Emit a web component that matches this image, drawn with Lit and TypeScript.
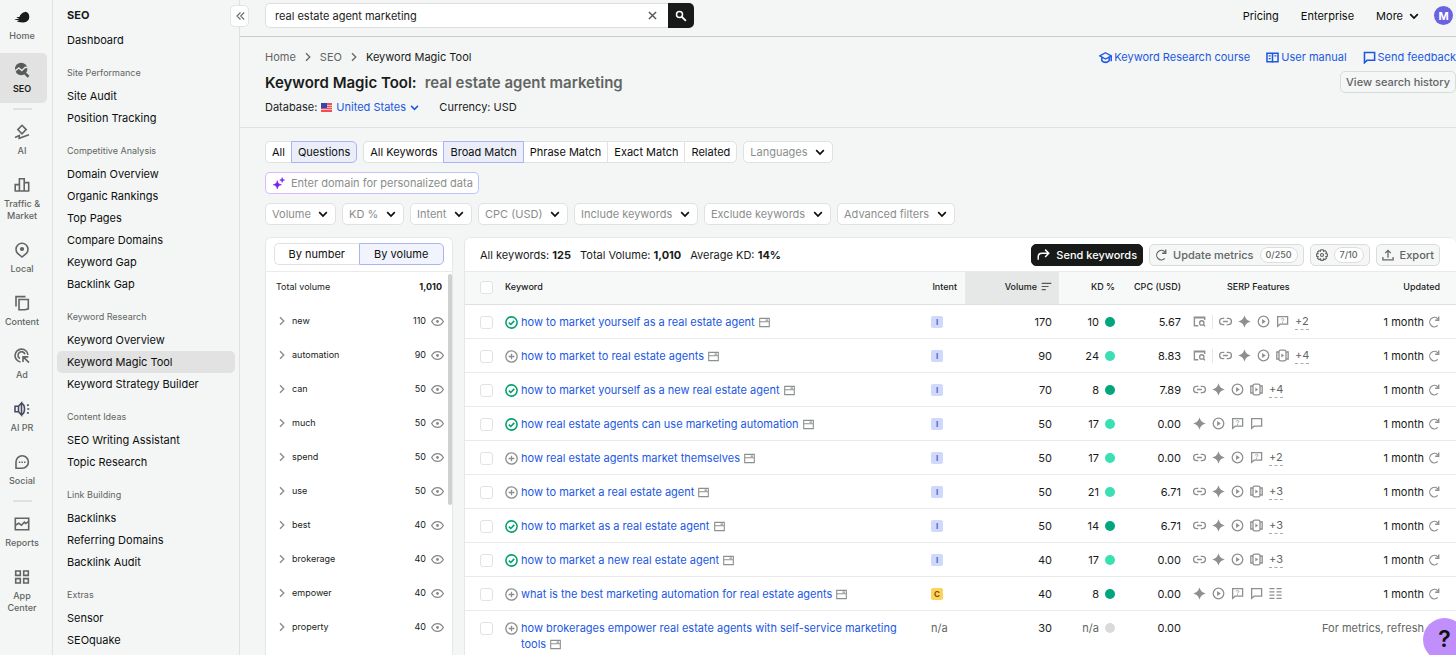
import { LitElement, html, css, svg, nothing } from "lit";
import { customElement } from "lit/decorators.js";
import { classMap } from "lit/directives/class-map.js";

const icon = (body: unknown, size = 16, box = 16, cls = "") => html`<svg
  class="icon ${cls}" width=${size} height=${size} viewBox="0 0 ${box} ${box}"
  fill="none" stroke="currentColor" stroke-width="1.6" aria-hidden="true">${body}</svg>`;

const chevDown = (size = 10) => icon(svg`<path d="M1.2 3.2 5 7l3.8-3.8" stroke-width="1.7"/>`, size, 10, "chev");
const chevRight = (size = 10) => icon(svg`<path d="M3 1.2 6.8 5 3 8.8" stroke-width="1.3"/>`, size, 10, "next");

const rail: Record<string, unknown> = {
  home: svg`<path d="M15.300 8.100c0 3.100-2.500 5.300-5.700 5.300-2.400 0-4.500-.3-6.300-.7-.4-.1-.3-.5.1-.5 1 0 1.800 0 2.300-.1-.9-.5-2.200-.9-4.700-1.500-.5-.1-.4-.6.1-.6 1.700 0 3 .1 4.100 0-.8-.6-1.500-1-2.400-1.500-.4-.3-.2-.7.300-.6.800.1 1.600.2 2.300.1C6 5.200 8.500 3.300 11 2.900c2.500-.3 4.300 1.900 4.300 5.200Z" fill="currentColor" stroke="none"/>`,
  seo: svg`<circle cx="7.200" cy="7" r="6.200" fill="currentColor" stroke="none"/><path d="m11 11.400 3.600 3.400" stroke-width="2.600"/><path d="M.5 9.300 4.800 6l3 2.500 3.500-3.300 3.200.3" stroke="#e1e2e1" stroke-width="1.500"/>`,
  ai: svg`<path d="m8 1.300 4.200 4.300L8 9.900 3.800 5.600Z"/><path d="M1 13.500l4.300-1.900-.1 2.700 9.800-3.500"/>`,
  traffic: svg`<path d="M1.200 14V7.600h4.200V14M5.400 14V1.800h4.800V14M10.200 14V5.600h4.500V14M.6 14h14.800"/>`,
  local: svg`<path d="M8 15 3.600 11.400a6 6 0 1 1 8.800 0Z"/><circle cx="8" cy="7" r="1.300" fill="currentColor"/>`,
  content: svg`<path d="M5 4.500h9.300v9.300L11 14.800H5Z"/><path d="M2 11.500V1.600h9.500"/>`,
  ad: svg`<path d="M6.500 14A6.500 6.500 0 1 1 14 7"/><path d="M6 10.600A3.600 3.600 0 1 1 11 6.200"/><path d="m15 14.600-5-5M9 14V8.900h5.300"/>`,
  pr: svg`<g stroke="#484a62"><path d="M1 5.200h3.500v5.600H1ZM4.500 5.200 7.500 2v12l-3-3.200"/><path d="M7.500 2.200c2.500 1 3 3.200 3 5.800s-.5 4.800-3 5.800"/><path d="m13 4.500 1.800-.8M13.300 8h2M13 11.500l1.800.8"/></g>`,
  social: svg`<path d="M2 14.200V8a6.200 6.200 0 1 1 6.200 6.200Z"/><path d="M4.800 8.200h1.500M7.400 8.200h1.500M10 8.200h1.500" stroke-width="1.500"/>`,
  reports: svg`<path d="M1.300 2.200h13.400v11.600H1.300Z"/><path d="m1.300 9.300 3.500-2.100 2.600 2 3-3 1.200 1.200 3-1.800"/>`,
  app: svg`<path d="M1.700 2h4.600v4.400H1.700ZM9.700 2h4.600v4.400H9.700ZM1.700 9.600h4.600V14H1.700ZM9.700 9.600h4.600V14H9.700Z"/>`,
};

const serp: Record<string, unknown> = {
  page: svg`<path d="M6.500 13.300H1.700V2.700h12.700V6M1 3.600h14" stroke-width="1.700"/><circle cx="10.800" cy="9.800" r="2.700"/><path d="m12.600 11.700 2.200 2.300"/>`,
  link: svg`<path d="M6.500 4.200H4.400a3.800 3.800 0 0 0 0 7.600h2.100M9.500 4.200h2.100a3.800 3.800 0 0 1 0 7.600H9.500M5 8h6" stroke-width="1.700"/>`,
  star: svg`<path d="M8 .3c1.200 4.300 3 6.300 7.700 7.700-4.700 1.400-6.500 3.400-7.700 7.700C6.800 11.400 5 9.400.3 8 5 6.600 6.800 4.600 8 .3Z" fill="currentColor" stroke="none"/>`,
  play: svg`<circle cx="8" cy="8" r="6.500"/><path d="M6.300 5v6l4.500-3Z" fill="currentColor" stroke="none"/>`,
  faq: svg`<path d="M2 14V2h12.300v9.300H5Z"/><path d="M6.400 5.500c.2-1.600 3.200-1.500 3.200.1 0 1.100-1.500 1.100-1.500 2.200M8.100 8.700v1.200" stroke-width="1.100"/>`,
  video: svg`<rect x="3.700" y="1.500" width="8.600" height="13" rx="2"/><path d="M3.700 3.700H1v8.600h2.700M12.300 3.700H15v8.600h-2.700"/><path d="M6.500 5.500v5L10 8Z" fill="currentColor" stroke="none"/>`,
  chat: svg`<path d="M2 14V2h12.300v9.300H5Z"/>`,
  list: svg`<path d="M.5 2h6.300M9.200 2h6.300M.5 6h6.300M9.200 6h6.300M.5 10h6.300M9.200 10h6.300M.5 14h6.300M9.200 14h6.300"/>`,
};

const refresh = (size = 12) => icon(svg`<path d="M13 12.600A6.300 6.300 0 1 1 12.800 3.500l1 1.600"/><path d="M14.300.8v4.800H9.500" stroke-width="1.800"/>`, size);
const pageIcon = icon(svg`<path d="M1 2h14v12H1ZM1 7h14M9.500 4.500h3.500"/>`, 11, 16, "pg");
const eye = icon(svg`<path d="M.8 8C2.600 4.700 5 3.200 8 3.200S13.400 4.700 15.200 8C13.400 11.300 11 12.800 8 12.800S2.600 11.300.8 8Z"/><circle cx="8" cy="8" r="1.700" fill="currentColor" stroke="none"/>`, 13);
const added = icon(svg`<circle cx="8" cy="8" r="6.900" stroke-width="1.900"/><path d="m4.700 8.200 2.400 2.300 4.300-4.500" stroke-width="1.900"/>`, 13, 16, "added");
const add = icon(svg`<circle cx="8" cy="8" r="7"/><path d="M8 4.500v7M4.500 8h7"/>`, 13, 16, "add");

const railItems: (string[] | null)[] = [
  ["home", "Home"], ["seo", "SEO"], null, ["ai", "AI"], ["traffic", "Traffic & Market"],
  ["local", "Local"], ["content", "Content"], ["ad", "Ad"], ["pr", "AI PR"], ["social", "Social"],
  null, ["reports", "Reports"], ["app", "App Center"],
];

const menu: [string, string[]][] = [
  ["Site Performance", ["Site Audit", "Position Tracking"]],
  ["Competitive Analysis", ["Domain Overview", "Organic Rankings", "Top Pages", "Compare Domains", "Keyword Gap", "Backlink Gap"]],
  ["Keyword Research", ["Keyword Overview", "Keyword Magic Tool", "Keyword Strategy Builder"]],
  ["Content Ideas", ["SEO Writing Assistant", "Topic Research"]],
  ["Link Building", ["Backlinks", "Referring Domains", "Backlink Audit"]],
  ["Extras", ["Sensor", "SEOquake"]],
];

const groups: [string, number][] = [
  ["new", 110], ["automation", 90], ["can", 50], ["much", 50], ["spend", 50],
  ["use", 50], ["best", 40], ["brokerage", 40], ["empower", 40], ["property", 40],
];

interface Row {
  kw: string; added?: boolean; intent: string; vol: number; kd: string; level: string;
  cpc: string; serp: string; more?: string; updated?: string;
}
const rows: Row[] = [
  { kw: "how to market yourself as a real estate agent", added: true, intent: "I", vol: 170, kd: "10", level: "very", cpc: "5.67", serp: "page | link star play faq", more: "+2" },
  { kw: "how to market to real estate agents", intent: "I", vol: 90, kd: "24", level: "easy", cpc: "8.83", serp: "page | link star play video", more: "+4" },
  { kw: "how to market yourself as a new real estate agent", added: true, intent: "I", vol: 70, kd: "8", level: "very", cpc: "7.89", serp: "link star play video", more: "+4" },
  { kw: "how real estate agents can use marketing automation", added: true, intent: "I", vol: 50, kd: "17", level: "easy", cpc: "0.00", serp: "star play faq chat" },
  { kw: "how real estate agents market themselves", intent: "I", vol: 50, kd: "17", level: "easy", cpc: "0.00", serp: "link star play faq", more: "+2" },
  { kw: "how to market a real estate agent", intent: "I", vol: 50, kd: "21", level: "easy", cpc: "6.71", serp: "link star play video", more: "+3" },
  { kw: "how to market as a real estate agent", added: true, intent: "I", vol: 50, kd: "14", level: "very", cpc: "6.71", serp: "link star play video", more: "+3" },
  { kw: "how to market a new real estate agent", added: true, intent: "I", vol: 40, kd: "17", level: "easy", cpc: "0.00", serp: "link star play video", more: "+3" },
  { kw: "what is the best marketing automation for real estate agents", intent: "C", vol: 40, kd: "8", level: "very", cpc: "0.00", serp: "star play faq chat list" },
  { kw: "how brokerages empower real estate agents with self-service marketing tools", intent: "n/a", vol: 30, kd: "n/a", level: "none", cpc: "0.00", serp: "", updated: "For metrics, refresh" },
];

@customElement("app-root")
export class AppRoot extends LitElement {
  static styles = css`
    :host {
      display: block; height: 100vh; overflow: hidden; background: #f4f6f5; color: #191b1a;
      font: 11px/16px Inter, "Liberation Sans", sans-serif;
    }
    * { box-sizing: border-box; }
    button, input, select { font: inherit; color: inherit; margin: 0; }
    button { cursor: pointer; }
    a { color: inherit; text-decoration: none; }
    h1, h2, h3 { margin: 0; padding: 0; font: inherit; }
    .icon { flex: none; display: block; }

    .shell { display: grid; grid-template-columns: 53px 187px minmax(0, 1fr); height: 100%; }

    .rail { display: flex; flex-direction: column; gap: 3px; border-right: 1px solid #e0e1e1; padding-right: 5px; overflow: hidden; }
    .rail-item {
      display: flex; flex-direction: column; align-items: center; gap: 5px; flex: none; padding: 9px 3px 8px 0;
      font-size: 9px; line-height: 12px; font-weight: 500; text-align: center; color: #626563; border-radius: 0 5px 5px 0;
    }
    .rail-item.on { background: #e1e2e1; color: #191b1a; font-weight: 600; }
    .rail-item.on .icon { color: #575a59; }
    .rail-item.home .icon { color: #191b1a; }
    .rail-sep { flex: none; height: 6px; width: 19px; margin-left: 13px; padding: 2px 0; background: #dfe0df content-box; }

    .side { border-right: 1px solid #e0e1e1; padding: 4px 4px 0; overflow: hidden; }
    .side-title { padding: 0 10px; line-height: 22px; font-weight: 700; margin-bottom: 3px; }
    .side-link { display: block; padding: 0 10px; line-height: 22px; border-radius: 5px; color: #0d0e0e; }
    .side-link.on { background: #e1e2e1; }
    .side-head { padding: 15px 10px 6px; font-size: 9px; line-height: 13px; color: #626563; }

    .main { position: relative; min-width: 0; display: flex; flex-direction: column; }
    .collapse {
      position: absolute; left: -10px; top: 5px; width: 19px; height: 22px; z-index: 2; padding: 0;
      display: grid; place-items: center; background: #fff; border: 1px solid #e3e4e4; border-radius: 5px; color: #6c6e79;
    }
    .top { display: flex; align-items: center; justify-content: space-between; height: 37px; padding: 0 3px 5px 25px; border-bottom: 1px solid #c9cccb; }
    .search { display: flex; width: 429px; height: 25px; }
    .search-box { flex: 1; display: flex; align-items: center; background: #fff; border: 1px solid #dcdedd; border-right: 0; border-radius: 5px 0 0 5px; padding-right: 9px; }
    .search-box input { flex: 1; min-width: 0; border: 0; outline: 0; background: none; padding: 0 9px; }
    .search-box button { border: 0; background: none; padding: 2px; color: #575a59; }
    .search-go { width: 26px; border: 0; padding: 0; background: #171a18; color: #fff; border-radius: 0 5px 5px 0; display: grid; place-items: center; }
    .nav { display: flex; align-items: center; gap: 22px; color: #0d0e0e; }
    .nav a { display: flex; align-items: center; gap: 6px; }
    .nav .account { display: grid; place-items: center; width: 19px; height: 19px; margin-left: -7px; border-radius: 50%; background: #6a62e0; color: #fff; font-weight: 700; }

    .head { display: flex; justify-content: space-between; padding: 12px 0 12px 25px; border-bottom: 1px solid #e0e1e1; }
    .crumbs { display: flex; align-items: center; gap: 7px; color: #626563; }
    .crumbs .here { color: #191b1a; }
    .title { display: flex; gap: 8px; margin: 6px 0 4px; font-size: 15px; line-height: 24px; font-weight: 600; }
    .title .q { color: #626563; }
    .meta { display: flex; align-items: center; gap: 20px; }
    .db { display: flex; align-items: center; gap: 4px; }
    .pick { display: inline-grid; align-items: center; }
    .pick select { grid-area: 1 / 1; appearance: none; border: 0; background: none; padding: 0; outline: 0; }
    .pick .chev { grid-area: 1 / 1; justify-self: end; pointer-events: none; color: #0d0e0e; }
    .pick.blue, .pick.blue .chev { color: #1b58e2; }
    .pick.blue select { padding-right: 13px; }
    .tools { display: flex; flex-direction: column; align-items: flex-end; gap: 6px; }
    .links { display: flex; gap: 16px; color: #1b58e2; }
    .links a { display: flex; align-items: center; gap: 2px; }
    .btn {
      display: inline-flex; align-items: center; gap: 6px; height: 22px; padding: 0 5px; white-space: nowrap;
      background: #f5f6f6; border: 1px solid #d9dcdb; border-radius: 5px; color: #626563; font-weight: 500;
    }
    .btn.dark { background: #171a18; border-color: #171a18; color: #fff; }
    .pill { border: 1px solid #dcdedd; border-radius: 9px; background: #fff; line-height: 14px; padding: 0 5px; font-size: 9px; }

    .filters { display: flex; flex-direction: column; gap: 9px; padding: 13px 0 12px 25px; }
    .frow { display: flex; gap: 6px; }
    .seg { display: flex; }
    .seg button {
      height: 22px; padding: 0 6px; background: #fff; border: 1px solid #e0e1e1; border-right-width: 0; color: #0d0e0e; white-space: nowrap;
    }
    .seg button:first-child { border-radius: 5px 0 0 5px; }
    .seg button:last-child { border-radius: 0 5px 5px 0; border-right-width: 1px; }
    .seg button.on { background: #ebedf8; border: 1px solid #aab4f4; }
    .seg button.on + button { border-left: 0; }
    .filters .pick { height: 22px; background: #fff; border: 1px solid #e0e1e1; border-radius: 5px; }
    .filters .pick select { color: #8a8e8c; padding: 0 24px 0 6px; height: 20px; }
    .filters .pick .chev { margin-right: 7px; }
    .domain {
      display: flex; align-items: center; gap: 6px; width: 214px; height: 22px; padding: 0 5px 0 6px; border: 1px solid transparent; border-radius: 5px;
      background: linear-gradient(#fff, #fff) padding-box, linear-gradient(90deg, #dcb8ff, #b9c6fb) border-box;
    }
    .domain input { flex: 1; min-width: 0; border: 0; outline: 0; padding: 0; background: none; }
    .domain input::placeholder { color: #8a8e8c; opacity: 1; }
    .domain .icon { color: #7a1ff0; }

    .body { flex: 1; min-height: 0; display: grid; grid-template-columns: 188px minmax(0, 1fr); gap: 11px; padding-left: 25px; }
    .card { background: #fff; border: 1px solid #e6e8e7; border-bottom: 0; border-radius: 6px 6px 0 0; overflow: hidden; min-height: 0; }
    .card.data { border-right: 0; }
    .groups { display: flex; flex-direction: column; }
    .by { padding: 5px 8px 6px; border-bottom: 1px solid #e9ebea; }
    .by .seg button { flex: 1; }
    .by .seg button.on { background: #f1f3fd; }
    .scroll { flex: 1; min-height: 0; display: flex; overflow: hidden; }
    .thumb { width: 4px; height: 231px; margin-top: 2px; border-radius: 3px; background: #cfd1d0; }
    .list { flex: 1; font-size: 9px; }
    .total { display: flex; justify-content: space-between; padding: 7px 6px 9px 10px; }
    .group { display: flex; align-items: center; height: 34px; padding: 0 4px 0 11px; }
    .group .name { flex: 1; padding-left: 5px; }
    .group .eye { border: 0; padding: 0; background: none; margin-left: 5px; }
    .group .icon { color: #858987; }

    .bar { display: flex; align-items: center; justify-content: space-between; height: 34px; padding: 0 16px 0 15px; border-bottom: 1px solid #e9ebea; }
    .stats, .acts { display: flex; align-items: center; }
    .stats { gap: 9px; }
    .acts { gap: 6px; }
    table { width: 100%; border-collapse: collapse; table-layout: fixed; }
    .c-check { width: 40px; } .c-intent { width: 40px; } .c-vol { width: 94px; } .c-kd { width: 62px; }
    .c-cpc { width: 66px; } .c-serp { width: 130px; } .c-upd { width: 139px; }
    th { height: 32px; padding: 0 0 2px; font-size: 9px; font-weight: 500; text-align: left; background: #f7f8f8; border-bottom: 1px solid #dfe1e0; white-space: nowrap; }
    td { padding: 9px 0 8px; vertical-align: top; border-bottom: 1px solid #e9ebea; }
    .check { padding-left: 15px; }
    .check input {
      appearance: none; display: block; width: 13px; height: 13px; margin: 2px 0 1px; border: 1px solid #e1e3e2; border-radius: 3px; background: #fff;
    }
    .num { text-align: right; white-space: nowrap; }
    .vol { padding-right: 7px; }
    th.vol { background: #e6e7e7; }
    th .icon { color: #575a59; }
    .vol .in, .kd .in, .upd .in { display: flex; justify-content: flex-end; align-items: center; gap: 4px; }
    .kd { padding-right: 6px; }
    .kd .in { gap: 6px; }
    .cpc { padding-right: 6px; }
    .upd { padding-right: 16px; }
    .upd .icon, .serp .icon { color: #8c908e; }
    .dot { width: 10px; height: 10px; border-radius: 50%; }
    .very { background: #00a67c; } .easy { background: #39e0b1; } .none { background: #d8dbda; }
    .muted { color: #626563; }
    .kw { display: flex; gap: 3px; padding-right: 20px; }
    .kw .icon { margin-top: 2px; }
    .kw a { color: #1b58e2; }
    .kw .pg { display: inline-block; vertical-align: top; margin: 3px 0 0 1px; color: #8c908e; }
    .added { color: #00a06f; } .add { color: #8a8e8c; }
    .th-intent { text-align: right; padding-right: 8px; }
    .intent { padding-left: 6px; }
    .badge { display: block; width: 12px; margin-top: 2px; line-height: 12px; border-radius: 2px; text-align: center; font-size: 8px; font-weight: 700; background: #cfd9fb; color: #5a5fc4; }
    .badge.c { background: #fbd25c; color: #8a4d00; }
    .serp .in { display: flex; align-items: center; gap: 6px; padding-left: 6px; height: 16px; }
    .th-serp { padding-left: 40px; }
    .serp .sep { width: 1px; height: 14px; background: #e6e8e7; }
    .serp .more { border-bottom: 1px dashed #a9acab; color: #626563; line-height: 16px; }
    .help {
      position: fixed; right: -10px; bottom: -6px; width: 43px; height: 43px; border: 0; border-radius: 50%;
      background: #c18ffc; color: #111; font-size: 23px; font-weight: 600; line-height: 43px; padding: 0;
    }
  `;

  private pick(label: string) {
    return html`<span class="pick"><select aria-label=${label}><option>${label}</option></select>${chevDown()}</span>`;
  }

  private seg(label: string, items: string[], on: string) {
    return html`<div class="seg" role="group" aria-label=${label}>
      ${items.map((t) => html`<button type="button" class=${classMap({ on: t === on })} aria-pressed=${t === on}>${t}</button>`)}
    </div>`;
  }

  private row(r: Row) {
    return html`<tr>
      <td class="check"><input type="checkbox" aria-label="Select ${r.kw}" /></td>
      <td><div class="kw">${r.added ? added : add}<span><a href="#">${r.kw}</a> ${pageIcon}</span></div></td>
      <td class="intent">${r.intent === "n/a" ? html`<span class="muted">n/a</span>`
        : html`<span class="badge ${classMap({ c: r.intent === "C" })}">${r.intent}</span>`}</td>
      <td class="num vol">${r.vol}</td>
      <td class="num kd"><div class="in"><span class=${classMap({ muted: r.level === "none" })}>${r.kd}</span><span class="dot ${r.level}"></span></div></td>
      <td class="num cpc">${r.cpc}</td>
      <td class="serp"><div class="in">
        ${r.serp ? r.serp.split(" ").map((k) => k === "|" ? html`<span class="sep"></span>` : icon(serp[k], 13)) : nothing}
        ${r.more ? html`<span class="more">${r.more}</span>` : nothing}
      </div></td>
      <td class="num upd"><div class="in"><span class=${classMap({ muted: !!r.updated })}>${r.updated ?? "1 month"}</span>${refresh()}</div></td>
    </tr>`;
  }

  render() {
    return html`<div class="shell">
      <nav class="rail" aria-label="Products">
        ${railItems.map((i) => i
          ? html`<a href="#" class="rail-item ${classMap({ on: i[0] === "seo", home: i[0] === "home" })}">${icon(rail[i[0]])}<span>${i[1]}</span></a>`
          : html`<div class="rail-sep"></div>`)}
      </nav>
      <nav class="side" aria-label="SEO">
        <h2 class="side-title">SEO</h2>
        <a href="#" class="side-link">Dashboard</a>
        ${menu.map(([h, links]) => html`<h3 class="side-head">${h}</h3>
          ${links.map((l) => html`<a href="#" class="side-link ${classMap({ on: l === "Keyword Magic Tool" })}">${l}</a>`)}`)}
      </nav>
      <main class="main">
        <button type="button" class="collapse" aria-label="Collapse menu">${icon(svg`<path d="M5.500 1.500 2 5l3.500 3.500M9.200 1.500 5.700 5l3.500 3.500" stroke-width="1.200"/>`, 10, 10)}</button>
        <header class="top">
          <form class="search" @submit=${(e: Event) => e.preventDefault()}>
            <div class="search-box">
              <input type="text" aria-label="Search" value="real estate agent marketing" />
              <button type="button" aria-label="Clear">${icon(svg`<path d="m1 1 8 8M9 1 1 9" stroke-width="1.600"/>`, 9, 10)}</button>
            </div>
            <button class="search-go" aria-label="Search">${icon(svg`<circle cx="6" cy="6" r="4" stroke-width="2"/><path d="m9 9 5.500 5.500" stroke-width="2.400"/>`, 12)}</button>
          </form>
          <nav class="nav" aria-label="Account">
            <a href="#">Pricing</a><a href="#">Enterprise</a><a href="#">More ${chevDown()}</a><a href="#" class="account">M</a>
          </nav>
        </header>
        <section class="head">
          <div>
            <nav class="crumbs" aria-label="Breadcrumb">
              <a href="#">Home</a>${chevRight()}<a href="#">SEO</a>${chevRight()}<span class="here">Keyword Magic Tool</span>
            </nav>
            <h1 class="title"><span>Keyword Magic Tool:</span><span class="q">real estate agent marketing</span></h1>
            <div class="meta">
              <label class="db">Database:
                <svg class="icon" width="11" height="9" viewBox="0 0 11 9" aria-hidden="true"><path fill="#e8505a" d="M0 0h11v9H0z"/><path stroke="#f8b9bd" d="M0 2.500h11M0 4.500h11M0 6.500h11"/><path fill="#3546b0" d="M0 0h6v5H0z"/></svg>
                <span class="pick blue"><select><option>United States</option></select>${chevDown(9)}</span>
              </label>
              <span>Currency: USD</span>
            </div>
          </div>
          <div class="tools">
            <div class="links">
              <a href="#">${icon(svg`<path d="M8 2.200 15 6 8 9.800 1 6Z"/><path d="M3.500 7.500v4.500C6 14.700 10 14.700 12.500 12V7.500M15 6v6.500" stroke-width="1.900"/>`, 13)}Keyword Research course</a>
              <a href="#">${icon(svg`<path d="M8 3.500V14.500M8 2.800H1.200v10.400H14.800V2.800Z" stroke-width="1.900"/><path d="M3.300 6h2.500M3.300 9.500h2.500M10.300 6h2.500"/>`, 13)}User manual</a>
              <a href="#">${icon(svg`<path d="M1.800 14.500V1.800h12.500v9.700H5Z" stroke-width="1.900"/>`, 13)}Send feedback</a>
            </div>
            <button type="button" class="btn">View search history</button>
          </div>
        </section>
        <section class="filters">
          <div class="frow">
            ${this.seg("Keyword type", ["All", "Questions"], "Questions")}
            ${this.seg("Match type", ["All Keywords", "Broad Match", "Phrase Match", "Exact Match", "Related"], "Broad Match")}
            ${this.pick("Languages")}
          </div>
          <label class="domain">${icon(svg`<path d="M6.500 4.500c.7 3.200 1.800 4.400 5 5-3.200.6-4.300 1.800-5 5-.7-3.200-1.800-4.400-5-5 3.200-.6 4.300-1.800 5-5ZM12.500.8c.4 1.900 1 2.500 2.900 2.900-1.900.4-2.500 1-2.900 2.900-.4-1.900-1-2.500-2.900-2.900 1.900-.4 2.500-1 2.900-2.900Z" fill="currentColor" stroke-width=".8"/>`, 13)}
            <input type="text" aria-label="Domain" placeholder="Enter domain for personalized data" /></label>
          <div class="frow">
            ${["Volume", "KD %", "Intent", "CPC (USD)", "Include keywords", "Exclude keywords", "Advanced filters"].map((t) => this.pick(t))}
          </div>
        </section>
        <section class="body">
          <aside class="card groups">
            <div class="by">${this.seg("Group by", ["By number", "By volume"], "By volume")}</div>
            <div class="scroll">
              <div class="list">
                <div class="total"><span>Total volume</span><strong>1,010</strong></div>
                ${groups.map(([n, v]) => html`<div class="group">${chevRight()}<span class="name">${n}</span><span>${v}</span>
                  <button type="button" class="eye" aria-label="Hide ${n}">${eye}</button></div>`)}
              </div>
              <div class="thumb"></div>
            </div>
          </aside>
          <div class="card data">
            <div class="bar">
              <div class="stats"><span>All keywords: <strong>125</strong></span><span>Total Volume: <strong>1,010</strong></span><span>Average KD: <strong>14%</strong></span></div>
              <div class="acts">
                <button type="button" class="btn dark">${icon(svg`<path d="M1.500 14.500V11c0-3 1.500-4.500 4.500-4.500h8M10 2l4.500 4.500L10 11" stroke-width="1.800"/>`, 13)}Send keywords</button>
                <button type="button" class="btn">${refresh(12)}Update metrics <span class="pill">0/250</span></button>
                <button type="button" class="btn" aria-label="Manage columns">${icon(svg`<path d="M6.500 1h3l.6 2 1.900-.8 2 2-.9 1.900 2 .6v2.900l-2 .6.9 1.900-2 2-1.900-.9-.6 2h-3l-.6-2-1.900.9-2-2 .9-1.900-2-.6V6.700l2-.6L2 4.200l2-2 1.900.8Z" stroke-width="1.600"/><circle cx="8" cy="8" r="2"/>`, 12)}<span class="pill">7/10</span></button>
                <button type="button" class="btn">${icon(svg`<path d="M1.200 10.500v4h13.600v-4M8 11.500V2M4.300 5.500 8 1.800l3.700 3.700" stroke-width="1.700"/>`, 12)}Export</button>
              </div>
            </div>
            <table>
              <colgroup><col class="c-check" /><col /><col class="c-intent" /><col class="c-vol" /><col class="c-kd" /><col class="c-cpc" /><col class="c-serp" /><col class="c-upd" /></colgroup>
              <thead><tr>
                <th class="check"><input type="checkbox" aria-label="Select all keywords" /></th>
                <th>Keyword</th><th class="th-intent">Intent</th>
                <th class="num vol"><div class="in">Volume ${icon(svg`<path d="M1 3.500h14M1 8h10M1 12.500h6" stroke-width="1.600"/>`, 11)}</div></th>
                <th class="num kd">KD %</th><th class="num cpc">CPC (USD)</th><th class="th-serp">SERP Features</th><th class="num upd">Updated</th>
              </tr></thead>
              <tbody>${rows.map((r) => this.row(r))}</tbody>
            </table>
          </div>
        </section>
      </main>
      <button type="button" class="help" aria-label="Help">?</button>
    </div>`;
  }
}
